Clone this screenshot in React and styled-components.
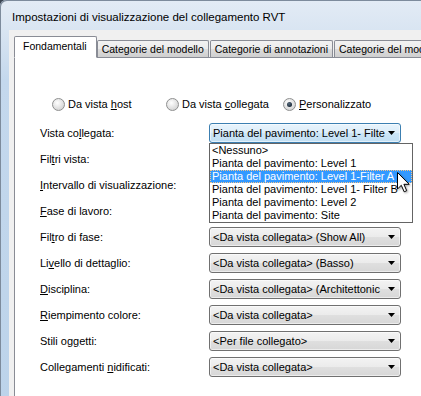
import React from 'react'
import styled, { createGlobalStyle } from 'styled-components'

const GlobalStyle = createGlobalStyle`
  html, body {
    margin: 0;
    padding: 0;
    background: #2b3440;
    font-family: "Liberation Sans", Arial, sans-serif;
  }
`

// mn = index of the underlined access-key letter
const radios = [
  { mn: 9, text: 'Da vista host', width: 114 },
  { mn: 9, text: 'Da vista collegata', width: 117 },
  { mn: 0, text: 'Personalizzato', width: 120, checked: true },
]

const rows = [
  { label: 'Vista collegata:', mn: 8, value: 'Pianta del pavimento: Level 1- Filte', open: true },
  { label: 'Filtri vista:', mn: 3 },
  { label: 'Intervallo di visualizzazione:', mn: 0 },
  { label: 'Fase di lavoro:', mn: 0 },
  { label: 'Filtro di fase:', mn: 3, value: '<Da vista collegata> (Show All)' },
  { label: 'Livello di dettaglio:', mn: 2, value: '<Da vista collegata> (Basso)' },
  { label: 'Disciplina:', mn: 0, value: '<Da vista collegata> (Architettonic' },
  { label: 'Riempimento colore:', mn: 0, value: '<Da vista collegata>' },
  { label: 'Stili oggetti:', mn: 8, value: '<Per file collegato>' },
  { label: 'Collegamenti nidificati:', mn: 13, value: '<Da vista collegata>' },
]

const options = [
  '<Nessuno>',
  'Pianta del pavimento: Level 1',
  'Pianta del pavimento: Level 1-Filter A',
  'Pianta del pavimento: Level 1- Filter B',
  'Pianta del pavimento: Level 2',
  'Pianta del pavimento: Site',
]

function Mnemonic({ text, mn }) {
  return (
    <>
      {text.slice(0, mn)}
      <Mn>{text[mn]}</Mn>
      {text.slice(mn + 1)}
    </>
  )
}

function Arrow() {
  return (
    <svg width="7" height="4" viewBox="0 0 7 4">
      <path d="M0 0 H7 L3.5 4 Z" fill="#000" />
    </svg>
  )
}

function Cursor() {
  return (
    <CursorWrap>
      <svg width="16" height="24" viewBox="0 0 16 24">
        <path
          d="M1.5 1.5 V18 L5.3 14.3 L8.2 20.8 L10.7 19.7 L7.9 13.3 H13.2 Z"
          fill="#fff"
          stroke="#000"
          strokeWidth="1"
        />
      </svg>
    </CursorWrap>
  )
}

function App() {
  return (
    <>
      <GlobalStyle />
      <Window>
        <Frame>
          <TitleBar>Impostazioni di visualizzazione del collegamento RVT</TitleBar>
          <Client>
            <TabStrip>
              <Tab $active>Fondamentali</Tab>
              <Tab>Categorie del modello</Tab>
              <Tab>Categorie di annotazioni</Tab>
              <Tab>Categorie del modello importate</Tab>
            </TabStrip>
            <Panel>
              <RadioRow>
                {radios.map(r => (
                  <RadioItem key={r.text} style={{ width: r.width }}>
                    <RadioDot $checked={r.checked} />
                    <span><Mnemonic text={r.text} mn={r.mn} /></span>
                  </RadioItem>
                ))}
              </RadioRow>
              <Form>
                {rows.map(r => (
                  <React.Fragment key={r.label}>
                    <Label><Mnemonic text={r.label} mn={r.mn} /></Label>
                    <Cell>
                      {r.value && (
                        <Combo $focused={r.open}>
                          <ComboText>{r.value}</ComboText>
                          <Arrow />
                          {r.open && (
                            <ListBox>
                              {options.map((o, i) => (
                                <ListItem key={o} $selected={i === 2}>{o}</ListItem>
                              ))}
                            </ListBox>
                          )}
                        </Combo>
                      )}
                    </Cell>
                  </React.Fragment>
                ))}
              </Form>
            </Panel>
          </Client>
        </Frame>
        <Cursor />
      </Window>
    </>
  )
}

const Window = styled.div`
  position: relative;
  width: 421px;
  height: 396px;
  overflow: hidden;
  background: #3a4452;
`

const Frame = styled.div`
  width: 460px;
  height: 420px;
  display: flex;
  flex-direction: column;
  border-top-left-radius: 6px;
  background: linear-gradient(180deg, #e3ebf5 0px, #d9e5f2 30px, #c4d8ed 80px, #bcd3ea 100%);
  box-shadow: inset 1px 1px 0 #7d8b9c;
`

const TitleBar = styled.div`
  height: 30px;
  padding: 5px 0 0 12px;
  box-sizing: border-box;
  font-size: 11.5px;
  line-height: 24px;
  color: #000;
  white-space: nowrap;
`

const Client = styled.div`
  flex: 1;
  margin-left: 9px;
  padding: 6px 0 0 5px;
  background: #f0f0f0;
  display: flex;
  flex-direction: column;
`

const TabStrip = styled.div`
  display: flex;
  align-items: flex-end;
  height: 21px;
  white-space: nowrap;
  position: relative;
  z-index: 1;
`

const Tab = styled.div`
  box-sizing: border-box;
  height: ${p => (p.$active ? '22px' : '17px')};
  margin-bottom: ${p => (p.$active ? '-1px' : '0')};
  margin-right: ${p => (p.$active ? '0' : '1px')};
  padding: ${p => (p.$active ? '2px 9px 0 8px' : '1px 4px 0 4px')};
  border: 1px solid #898c95;
  border-bottom: ${p => (p.$active ? '1px solid #fff' : '0')};
  border-radius: 2px 2px 0 0;
  background: ${p =>
    p.$active ? '#fff' : 'linear-gradient(180deg, #f2f2f2 0%, #ebebeb 50%, #dddddd 51%, #cfcfcf 100%)'};
  font-size: 10.5px;
  line-height: 14px;
  color: #000;
`

const Panel = styled.div`
  flex: 1;
  background: #fff;
  border: 1px solid #898c95;
  padding-top: 39px;
`

const RadioRow = styled.div`
  display: flex;
  padding-left: 37px;
  height: 14px;
`

const RadioItem = styled.label`
  display: flex;
  align-items: center;
  gap: 3px;
  font-size: 11px;
  color: #000;
  white-space: nowrap;
`

const RadioDot = styled.span`
  position: relative;
  width: 13px;
  height: 13px;
  box-sizing: border-box;
  border-radius: 50%;
  border: 1px solid #8e8f8f;
  background: radial-gradient(circle at 40% 35%, #ffffff 0%, #e6e6e6 45%, #c9c9c9 100%);
  flex: none;

  &::after {
    content: '';
    display: ${p => (p.$checked ? 'block' : 'none')};
    position: absolute;
    left: 3px;
    top: 3px;
    width: 5px;
    height: 5px;
    border-radius: 50%;
    background: radial-gradient(circle at 40% 35%, #5a6e80 0%, #1c2a38 70%);
  }
`

const Form = styled.div`
  display: grid;
  grid-template-columns: 169px 192px;
  grid-auto-rows: 26px;
  align-items: center;
  padding: 9px 0 0 25px;
`

const Label = styled.div`
  font-size: 11px;
  line-height: 13px;
  color: #000;
  white-space: nowrap;
`

const Mn = styled.span`
  text-decoration: underline;
`

const Cell = styled.div`
  height: 20px;
`

const Combo = styled.div`
  position: relative;
  box-sizing: border-box;
  height: 20px;
  display: flex;
  align-items: center;
  padding: 0 5px 0 3px;
  border: 1px solid ${p => (p.$focused ? '#3c7fb1' : '#707070')};
  border-radius: 3px;
  background: ${p =>
    p.$focused
      ? 'linear-gradient(180deg, #e8f4fc 0%, #dcedf9 50%, #cce5f6 51%, #c2dff3 100%)'
      : 'linear-gradient(180deg, #f3f3f3 0%, #ebebeb 50%, #dfdfdf 51%, #d7d7d7 100%)'};
  box-shadow: inset 0 0 0 1px rgba(255, 255, 255, 0.55);
`

const ComboText = styled.span`
  flex: 1;
  font-size: 11px;
  line-height: 13px;
  color: #000;
  white-space: nowrap;
  overflow: hidden;
`

const ListBox = styled.div`
  position: absolute;
  left: -1px;
  top: 19px;
  width: 204px;
  box-sizing: border-box;
  border: 1px solid #646464;
  background: #fff;
  z-index: 2;
`

const ListItem = styled.div`
  box-sizing: border-box;
  height: 13px;
  padding-left: 2px;
  font-size: 11px;
  line-height: 12px;
  white-space: nowrap;
  color: ${p => (p.$selected ? '#fff' : '#000')};
  background: ${p => (p.$selected ? '#3399ff' : 'transparent')};
  outline: ${p => (p.$selected ? '1px dotted #f5c58a' : 'none')};
  outline-offset: -1px;
`

const CursorWrap = styled.div`
  position: absolute;
  left: 396px;
  top: 171px;
  z-index: 5;
  filter: drop-shadow(1px 1px 1px rgba(0, 0, 0, 0.35));
  line-height: 0;
`

export default App
